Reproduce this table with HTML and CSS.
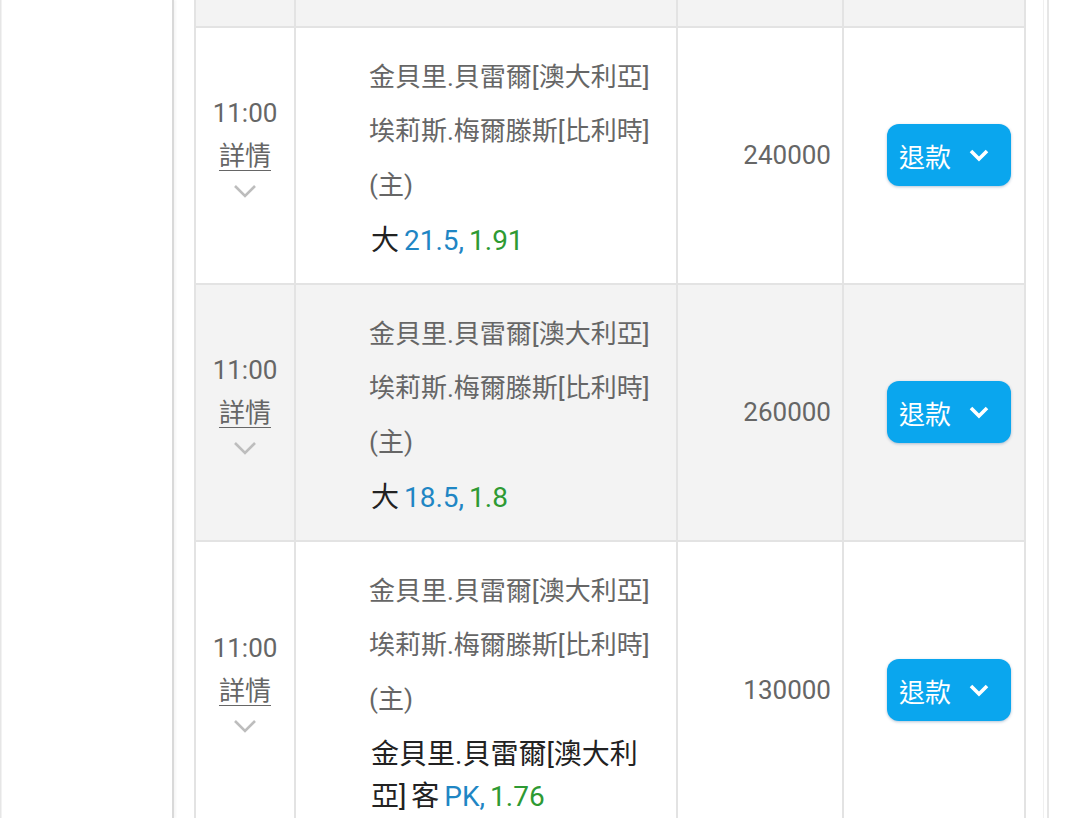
FILE: index.html
```html
<!DOCTYPE html>
<html lang="zh-Hant">
<head>
<meta charset="utf-8">
<title>注單</title>
<link rel="stylesheet" href="styles.css">
</head>
<body>
<div class="page">
  <aside class="side"></aside>
  <main class="main">
    <table class="bets">
      <colgroup>
        <col class="c-time"><col class="c-match"><col class="c-amt"><col class="c-act">
      </colgroup>
      <tr class="head"><td></td><td></td><td></td><td></td></tr>
      <tr class="row">
        <td class="time">
          <div class="t">11:00</div>
          <div class="detail"><a>詳情</a></div>
          <div class="chev"><svg width="24" height="14" viewBox="0 0 24 14"><path d="M2 2 L12 12 L22 2" fill="none" stroke="#bdbdbd" stroke-width="2.6"/></svg></div>
        </td>
        <td class="match">
          <p class="team">金貝里.貝雷爾[澳大利亞]</p>
          <p class="team">埃莉斯.梅爾滕斯[比利時]</p>
          <p class="team">(主)</p>
          <p class="pick">大 <span class="blue">21.5,</span> <span class="green">1.91</span></p>
        </td>
        <td class="amt">240000</td>
        <td class="act"><button class="btn">退款<svg width="22" height="14" viewBox="0 0 22 14"><path d="M3 3 L11 11 L19 3" fill="none" stroke="#fff" stroke-width="3.6"/></svg></button></td>
      </tr>
      <tr class="row alt">
        <td class="time">
          <div class="t">11:00</div>
          <div class="detail"><a>詳情</a></div>
          <div class="chev"><svg width="24" height="14" viewBox="0 0 24 14"><path d="M2 2 L12 12 L22 2" fill="none" stroke="#bdbdbd" stroke-width="2.6"/></svg></div>
        </td>
        <td class="match">
          <p class="team">金貝里.貝雷爾[澳大利亞]</p>
          <p class="team">埃莉斯.梅爾滕斯[比利時]</p>
          <p class="team">(主)</p>
          <p class="pick">大 <span class="blue">18.5,</span> <span class="green">1.8</span></p>
        </td>
        <td class="amt">260000</td>
        <td class="act"><button class="btn">退款<svg width="22" height="14" viewBox="0 0 22 14"><path d="M3 3 L11 11 L19 3" fill="none" stroke="#fff" stroke-width="3.6"/></svg></button></td>
      </tr>
      <tr class="row">
        <td class="time">
          <div class="t">11:00</div>
          <div class="detail"><a>詳情</a></div>
          <div class="chev"><svg width="24" height="14" viewBox="0 0 24 14"><path d="M2 2 L12 12 L22 2" fill="none" stroke="#bdbdbd" stroke-width="2.6"/></svg></div>
        </td>
        <td class="match">
          <p class="team">金貝里.貝雷爾[澳大利亞]</p>
          <p class="team">埃莉斯.梅爾滕斯[比利時]</p>
          <p class="team">(主)</p>
          <p class="pick">金貝里.貝雷爾[澳大利亞] 客 <span class="blue">PK,</span> <span class="green">1.76</span></p>
        </td>
        <td class="amt">130000</td>
        <td class="act"><button class="btn">退款<svg width="22" height="14" viewBox="0 0 22 14"><path d="M3 3 L11 11 L19 3" fill="none" stroke="#fff" stroke-width="3.6"/></svg></button></td>
      </tr>
    </table>
  </main>
  <div class="gutter"></div>
</div>
</body>
</html>
```

FILE: styles.css
```css
html, body {
  margin: 0;
  padding: 0;
  background: #fff;
  height: 818px;
  overflow: hidden;
}
body {
  font-family: Roboto, "Noto Sans CJK TC", sans-serif;
  color: #666;
}
.page {
  display: flex;
  align-items: flex-start;
  height: 818px;
}
.side {
  width: 171px;
  height: 818px;
  flex: none;
  border-left: 1px solid #e6e6e6;
  border-right: 2px solid #d9d9d9;
  box-shadow: inset 6px 0 0 -5px #f2f2f2, 2px 0 2px rgba(0,0,0,0.04);
}
.main {
  flex: none;
  padding-left: 20px;
}
.gutter {
  flex: none;
  margin-left: 17px;
  width: 2px;
  height: 818px;
  border-left: 1px solid #f0f0f0;
  border-right: 2px solid #e6e6e6;
  padding-left: 1px;
  box-sizing: content-box;
}
.bets {
  border-collapse: collapse;
  table-layout: fixed;
  width: 832px;
}
.c-time { width: 100px; }
.c-match { width: 382px; }
.c-amt { width: 166px; }
.c-act { width: 182px; }
.bets td {
  border: 2px solid #e3e3e3;
  padding: 0;
}
.head td {
  height: 26px;
  border-top: 0;
  background: #f3f3f3;
}
.row td {
  vertical-align: middle;
  padding-top: 22px;
  padding-bottom: 21px;
}
.alt td {
  background: #f3f3f3;
}
.time {
  text-align: center;
  font-size: 26px;
}
.time .t,
.time .detail {
  line-height: 43px;
  height: 43px;
}
.detail a {
  text-decoration: underline;
  text-underline-offset: 5px;
  text-decoration-thickness: 1px;
  color: #666;
}
.chev {
  height: 43px;
  padding-top: 6px;
  box-sizing: border-box;
  line-height: 0;
}
.match {
  padding-left: 73px !important;
  padding-right: 20px !important;
}
.team {
  margin: 0;
  font-size: 26px;
  line-height: 54px;
  color: #666;
  white-space: nowrap;
}
.pick {
  margin: 8px 0 0 2px;
  font-size: 28px;
  line-height: 42px;
  color: #222;
  word-spacing: -2px;
}
.blue { color: #1f86c4; }
.green { color: #2e9a33; }
.amt {
  text-align: right;
  padding-right: 11px !important;
  padding-bottom: 24px !important;
  font-size: 26px;
  color: #666;
}
.act {
  text-align: right;
  padding-right: 13px !important;
  padding-bottom: 23px !important;
}
.btn {
  display: inline-flex;
  align-items: center;
  justify-content: space-between;
  width: 124px;
  height: 62px;
  padding: 0 21px 0 12px;
  box-sizing: border-box;
  border: 0;
  border-radius: 12px;
  background: #0aa6ee;
  color: #fff;
  font-family: Roboto, "Noto Sans CJK TC", sans-serif;
  font-size: 26px;
  box-shadow: 0 1px 3px rgba(0, 60, 120, 0.3);
}
```
